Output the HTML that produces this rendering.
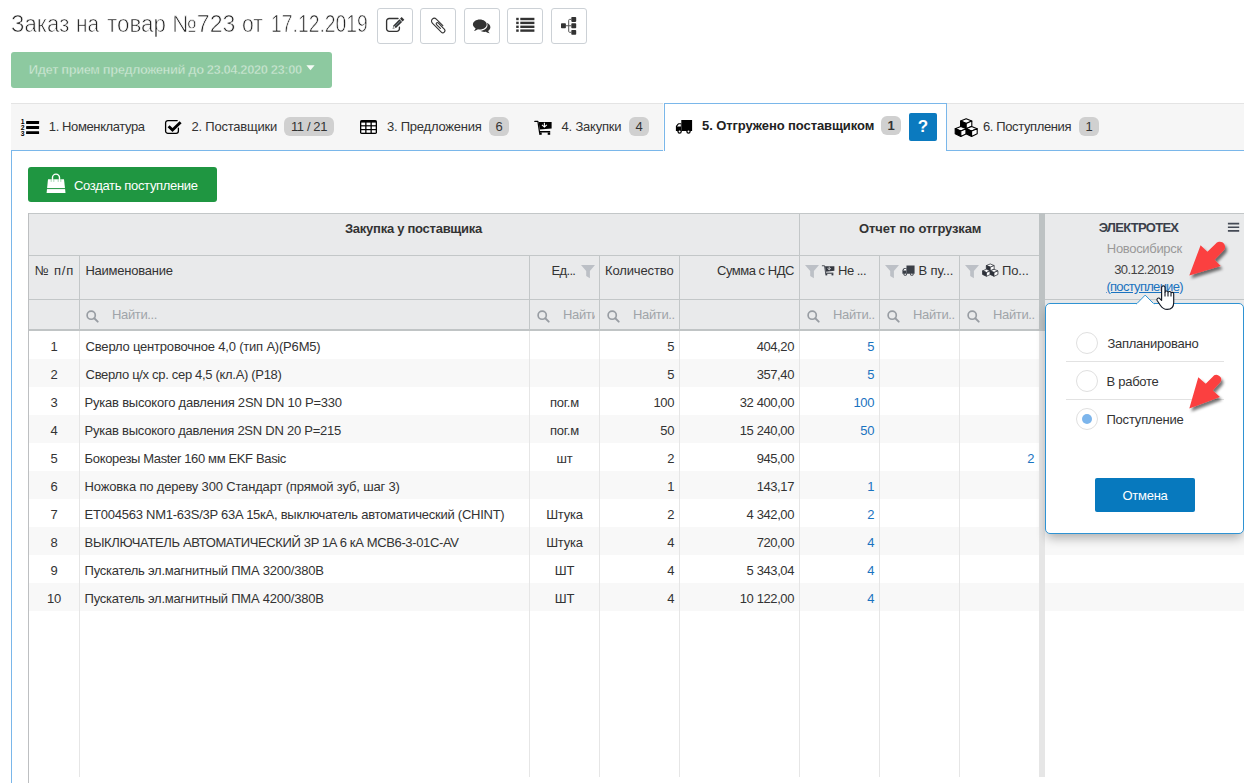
<!DOCTYPE html>
<html lang="ru">
<head>
<meta charset="utf-8">
<title>Заказ на товар №723</title>
<style>
*{box-sizing:border-box;margin:0;padding:0}
html,body{width:1244px;height:783px;overflow:hidden;background:#fff}
body{font-family:"Liberation Sans",sans-serif;font-size:13px;color:#333;position:relative}
.abs{position:absolute}
.tw{position:absolute;top:8px;font-size:23.5px;line-height:32px;color:#222;white-space:nowrap;-webkit-text-stroke:0.7px #fff}
.tb{position:absolute;top:8px;width:36px;height:36px;border:1px solid #ccd1d6;border-radius:3px;background:#fff}
.tb svg{position:absolute;left:0;top:0}
#status{left:11px;top:52px;width:321px;height:36px;background:#8dc9a0;border-radius:3px;color:#cbe6d3;-webkit-text-stroke:0.4px #8dc9a0;font-weight:bold;font-size:13px;line-height:35px;white-space:nowrap}
#tabs{left:11px;top:103px;width:1233px;height:48px;background:#f6f6f6;border-top:1px solid #e4e4e4;border-bottom:1px solid #7ab7ea}
.tl{position:absolute;top:103px;height:47px;line-height:47px;font-size:13px;color:#333;white-space:nowrap}
.badge{position:absolute;top:117px;height:19px;line-height:19px;border-radius:6px;background:#d0d0d0;color:#333;font-size:13px;text-align:center}
#tabactive{left:664px;top:103px;width:283px;height:48px;background:#fff;border:1px solid #7ab7ea;border-bottom:none;box-shadow:-1px 0 0 #fdfbf8}
#help{left:909px;top:113px;width:28px;height:28px;background:#0b7abf;border-radius:2px;color:#fff;font-weight:bold;font-size:17px;line-height:28px;text-align:center}
#panel{left:11px;top:151px;width:1px;height:640px;background:#7ab7ea}
#create{left:28px;top:167px;width:189px;height:35px;background:#1f9641;border-radius:3px;color:#fff;font-size:13px;line-height:37px;white-space:nowrap}
#grid{position:absolute;left:0;top:0;width:1244px;height:783px}
.hbg{position:absolute;left:28px;top:213px;width:1216px;height:117px;background:#e9eaeb}
.hl{position:absolute;height:1px;background:#c3c7c8}
.hl2{position:absolute;height:2px;background:#c0c4c5}
.vlh{position:absolute;width:1px;background:#c3c7c8}
.vlb{position:absolute;width:1px;top:331px;height:446px;background:#e6e6e6}
.gleft{position:absolute;left:28px;top:213px;width:1px;height:570px;background:#bdbfc1}
.sep-h{position:absolute;left:1039px;top:213px;width:6px;height:118px;background:#bdc2c3}
.sep-b{position:absolute;left:1039px;top:331px;width:6px;height:446px;background:#e6e6e6}
.stripe{position:absolute;left:29px;width:1215px;height:28px;background:#f8f8f8}
.ht{position:absolute;font-size:13px;line-height:17px;color:#333;white-space:nowrap}
.b{font-weight:bold}
.ft{position:absolute;top:306px;height:18px;line-height:18px;font-size:13px;color:#a0a4a9;white-space:nowrap;overflow:hidden;letter-spacing:-0.35px}
.c{position:absolute;height:28px;line-height:32px;font-size:13px;color:#333;white-space:nowrap}
.ctr{text-align:center;letter-spacing:-0.2px}
.r{text-align:right;letter-spacing:-0.4px}
.bl{color:#1a73c0}
#pop{left:1045px;top:303px;width:199px;height:231px;background:#fff;border:1px solid #2f93d3;border-radius:5px;box-shadow:0 6px 11px -2px rgba(0,0,0,.3)}
.rad{position:absolute;left:1076px;width:22px;height:22px;border:1px solid #e0e0e0;border-radius:50%;background:#fff}
.rad i{position:absolute;left:5px;top:5px;width:10px;height:10px;border-radius:50%;background:#7cb5ec}
.psep{position:absolute;left:1066px;width:158px;height:1px;background:#e2e2e2}
#cancel{left:1095px;top:478px;width:100px;height:34px;background:#0779be;border-radius:2px;color:#fff;font-size:13px;line-height:36px;text-align:center;letter-spacing:-0.25px}

</style>
</head>
<body>
<svg width="0" height="0" style="position:absolute">
 <defs>
  <g id="i_cart">
   <path d="M1.8 2.4 H4.9 L6.6 13.6" fill="none" stroke="currentColor" stroke-width="1.2" stroke-linecap="round" stroke-linejoin="round"/>
   <path d="M5.6 3.1 H18.600000000000001 V9.4 L6.7 10.6 z" fill="currentColor"/>
   <path d="M11.4 3.8 V7.4 M9 5.9 L11.4 8.1 L13.8 5.9" fill="none" stroke="#fff" stroke-width="1.1"/>
   <rect x="6.6" y="12" width="10.6" height="1.5" fill="currentColor"/>
   <rect x="6.2" y="13.5" width="2.5" height="2.3" fill="currentColor"/><rect x="14.7" y="13.5" width="2.5" height="2.3" fill="currentColor"/>
  </g>
  <g id="i_truck">
   <path d="M7.3 2 H18.1 V13 H7.3 z" fill="currentColor"/>
   <path d="M7.3 5.3 H4.6 a1.2 1.2 0 0 0 -0.9 0.4 L1.9 8.1 V13 H7.3 z" fill="currentColor"/>
   <path d="M3 8.6 L4.8 6.3 H6.8 V8.6 z" fill="#fff"/>
   <circle cx="5.6" cy="13.6" r="2.2" fill="currentColor"/><circle cx="5.6" cy="13.6" r="1" fill="#fff"/>
   <circle cx="14.5" cy="13.6" r="2.2" fill="currentColor"/><circle cx="14.5" cy="13.6" r="1" fill="#fff"/>
  </g>
  <g id="i_cube1">
   <path d="M-5.6 2.3 L0 0 L5.6 2.3 L0 4.6 z" fill="#fff" stroke="currentColor" stroke-width="1.1" stroke-linejoin="round"/>
   <path d="M-5.6 2.3 L0 4.6 V10 L-5.6 7.4 z" fill="currentColor" stroke="currentColor" stroke-width="1.1" stroke-linejoin="round"/>
   <path d="M0 4.6 L5.6 2.3 V7.4 L0 10 z" fill="#fff" stroke="currentColor" stroke-width="1.1" stroke-linejoin="round"/>
  </g>
  <g id="i_cubes">
   <use href="#i_cube1" x="13.2" y="2.800000000000001"/>
   <use href="#i_cube1" x="7.8" y="10.4"/>
   <use href="#i_cube1" x="18.6" y="10.4"/>
  </g>
  <g id="i_funnel">
   <path d="M0 0 H14 L8.9 5.9 V13.2 L5.2 11 V5.9 z" fill="#bcc0c6"/>
  </g>
 </defs>
</svg>
<svg width="0" height="0" style="position:absolute">
 <defs>
  <filter id="ash" x="-30%" y="-30%" width="170%" height="170%"><feGaussianBlur in="SourceAlpha" stdDeviation="1.6"/><feOffset dx="2" dy="3"/><feComponentTransfer><feFuncA type="linear" slope="0.55"/></feComponentTransfer><feMerge><feMergeNode/><feMergeNode in="SourceGraphic"/></feMerge></filter>
  <g id="i_arrow1" filter="url(#ash)"><path d="M14.3 43.5 L25.6 13.2 L32.4 19.8 L40.4 11.9 A5.3 5.3 0 0 1 49.1 18 L39.6 27.7 L45.7 34 z" fill="#fb4040"/></g>
  <g id="i_arrow2" filter="url(#ash)"><path d="M14.3 43.5 L23.3 12.2 L30.7 18.7 L37.5 11.9 A4.75 4.75 0 0 1 45.5 17 L37.8 25.6 L45 32 z" fill="#fb4040"/></g>
 </defs>
</svg>

<div class="tw" style="left:11px"><span id="tw1" style="display:inline-block;transform-origin:0 50%;transform:scaleX(0.9469);position:relative;left:-0.5px">Заказ</span></div><div class="tw" style="left:77px"><span id="tw2" style="display:inline-block;transform-origin:0 50%;transform:scaleX(0.8865);position:relative;left:-1.0px">на</span></div><div class="tw" style="left:107px"><span id="tw3" style="display:inline-block;transform-origin:0 50%;transform:scaleX(0.9525);position:relative;left:-0.5px">товар</span></div><div class="tw" style="left:173px"><span id="tw4" style="display:inline-block;transform-origin:0 50%;transform:scaleX(0.9859);position:relative;left:-1.0px">№723</span></div><div class="tw" style="left:243px"><span id="tw5" style="display:inline-block;transform-origin:0 50%;transform:scaleX(0.9);position:relative;left:-1.0px">от</span></div><div class="tw" style="left:271px"><span id="tw6" style="display:inline-block;transform-origin:0 50%;transform:scaleX(0.8237);position:relative;left:-0.5px">17.12.2019</span></div>

<div class="tb" style="left:377px" id="tb1"></div>
<div class="tb" style="left:420px" id="tb2"></div>
<div class="tb" style="left:464px" id="tb3"></div>
<div class="tb" style="left:507px" id="tb4"></div>
<div class="tb" style="left:551px" id="tb5"></div>

<!-- toolbar icons (inside 36x36 buttons, coords relative to page) -->
<svg class="abs" style="left:377px;top:8px" width="36" height="36" viewBox="0 0 36 36">
 <path d="M21 10.5 H12.2 a2.6 2.6 0 0 0 -2.6 2.6 V20.7 a2.6 2.6 0 0 0 2.6 2.6 H19.8 a2.6 2.6 0 0 0 2.6 -2.6 V19.2" fill="none" stroke="#333" stroke-width="1.35" stroke-linecap="round"/>
 <g transform="translate(15.6 20.8) rotate(-45)">
  <path d="M0 0 L3.3 -1.85 H11.6 V1.85 H3.3 z" fill="#333"/>
  <path d="M0.9 0 L3.1 -1.1 V1.1 z" fill="#fff"/>
  <path d="M3.6 -0.05 H11.4" stroke="#8fa3b0" stroke-width="0.8"/>
  <rect x="12.3" y="-1.85" width="2.4" height="3.7" fill="#333"/>
 </g>
</svg>
<svg class="abs" style="left:420px;top:8px" width="36" height="36" viewBox="0 0 36 36">
 <g transform="translate(18.55 17.35) rotate(-45)" fill="none" stroke="#333" stroke-width="1.1" stroke-linecap="round">
  <path d="M2.8 3.3 V-6 A2.8 2.8 0 0 0 -2.8 -6 V6.7 A2.1 2.1 0 0 0 1.4 6.7 V-1.95 A1.15 1.15 0 0 0 -0.9 -1.95 V3.5"/>
 </g>
</svg>
<svg class="abs" style="left:464.4px;top:8.7px" width="36" height="36" viewBox="0 0 36 36">
 <path d="M22.5 13.7 c2.3 0.8 3.9 2.5 3.9 4.5 c0 1.5 -0.9 2.8 -2.3 3.7 c0.3 0.9 0.9 1.7 1.7 2.3 c-1.6 0 -3 -0.5 -4 -1.4 c-0.5 0.1 -1 0.1 -1.5 0.1 c-1.6 0 -3 -0.4 -4.1 -1.1 c4.100000000000001 -0.2 7.3 -2.8 7.3 -5.9 c0 -0.8 -0.3 -1.5 -1 -2.2 z" fill="#333"/>
 <path d="M15.8 10.5 c3.8 0 6.9 2.2 6.9 5 s-3.100000000000001 5 -6.9 5 c-0.6 0 -1.2 -0.1 -1.8 -0.2 c-1.1 0.9 -2.5 1.500000000000001 -4.1 1.500000000000001 c0.8 -0.6 1.4 -1.5 1.7 -2.5 c-1.6 -0.9 -2.7 -2.3 -2.7 -3.8 c0 -2.8 3.1 -5 6.9 -5 z" fill="#333"/>
</svg>
<svg class="abs" style="left:507px;top:8px" width="36" height="36" viewBox="0 0 36 36">
 <g fill="#333">
  <rect x="9.2" y="9.8" width="2.5" height="2.4"/><rect x="13.3" y="9.8" width="14.1" height="2.4"/>
  <rect x="9.2" y="13.7" width="2.5" height="2.4"/><rect x="13.3" y="13.7" width="14.1" height="2.4"/>
  <rect x="9.2" y="17.6" width="2.5" height="2.4"/><rect x="13.3" y="17.6" width="14.1" height="2.4"/>
  <rect x="9.2" y="21.4" width="2.5" height="2.4"/><rect x="13.3" y="21.4" width="14.1" height="2.4"/>
 </g>
</svg>
<svg class="abs" style="left:551px;top:8px" width="36" height="36" viewBox="0 0 36 36">
 <g fill="#333">
  <rect x="10" y="15.3" width="4.9" height="4.9" rx="0.8"/>
  <rect x="20.3" y="9" width="4.9" height="4.9" rx="0.8"/>
  <rect x="20.3" y="15.3" width="4.9" height="4.9" rx="0.8"/>
  <rect x="20.3" y="21.9" width="4.9" height="4.9" rx="0.8"/>
 </g>
 <path d="M14.9 17.75 H20.3 M20.3 11.4 H18.6 a0.9 0.9 0 0 0 -0.9 0.9 V23.4 a0.9 0.9 0 0 0 0.9 0.9 H20.3" fill="none" stroke="#555" stroke-width="1"/>
</svg>

<div id="status" class="abs"><div style="position:absolute;left:19px;top:0"><span id="st_t" style="letter-spacing:-0.437px;position:relative;left:-1.2px">Идет прием предложений до 23.04.2020 23:00</span></div><svg style="position:absolute;left:294.5px;top:13px" width="10" height="6" viewBox="0 0 10 6"><path d="M0.4 0.2 H8.6 L4.5 5.2 z" fill="#f6fbf7"/></svg></div>

<div id="tabs" class="abs"></div>
<div id="tabactive" class="abs"></div>
<div class="tl" style="left:49px"><span id="t1" style="letter-spacing:-0.386px;position:relative;left:-0.2px">1. Номенклатура</span></div>
<div class="tl" style="left:191px"><span id="t2" style="letter-spacing:-0.236px;position:relative;left:0.6px">2. Поставщики</span></div>
<div class="badge" style="left:284px;width:50px;letter-spacing:-0.4px">11 / 21</div>
<div class="tl" style="left:386px"><span id="t3" style="letter-spacing:-0.231px;position:relative;left:1.0px">3. Предложения</span></div>
<div class="badge" style="left:489px;width:20px">6</div>
<div class="tl" style="left:561px"><span id="t4" style="letter-spacing:-0.207px;position:relative;left:0.6px">4. Закупки</span></div>
<div class="badge" style="left:629px;width:20px">4</div>
<div class="tl b" style="left:701px;top:102px;color:#222"><span id="t5" style="letter-spacing:-0.087px;position:relative;left:1.0px">5. Отгружено поставщиком</span></div>
<div class="badge b" style="left:881px;top:116px;width:20px">1</div>
<div id="help" class="abs">?</div>
<div class="tl" style="left:982px"><span id="t6" style="letter-spacing:-0.385px;position:relative;left:1.0px">6. Поступления</span></div>
<div class="badge" style="left:1079px;width:20px">1</div>

<!-- tab icons -->
<svg class="abs" style="left:20px;top:117px" width="21" height="21" viewBox="0 0 21 21">
 <g fill="#000"><rect x="6.1" y="4" width="13" height="2.9" rx="0.4"/><rect x="6.1" y="9" width="13" height="2.9" rx="0.4"/><rect x="6.1" y="14.2" width="13" height="2.9" rx="0.4"/></g>
 <g font-family="Liberation Sans, sans-serif" font-weight="bold" font-size="6.8" fill="#000"><text x="0.8" y="6.8">1</text><text x="0.8" y="12.8">2</text><text x="0.8" y="19.4">3</text></g>
</svg>
<svg class="abs" style="left:163px;top:117px" width="21" height="21" viewBox="0 0 21 21">
 <path d="M14.2 3.6 H4.9 a2.3 2.3 0 0 0 -2.3 2.300000000000001 V14 a2.3 2.3 0 0 0 2.3 2.3 H13.1 a2.3 2.3 0 0 0 2.3 -2.3 V11.2" fill="none" stroke="#000" stroke-width="1.3" stroke-linecap="round"/>
 <path d="M5.6 9.2 L9.5 13 L17.6 5.200000000000001" fill="none" stroke="#000" stroke-width="2.9" stroke-linejoin="miter"/>
</svg>
<svg class="abs" style="left:359px;top:118px" width="20" height="18" viewBox="0 0 20 18">
 <rect x="1" y="2" width="17" height="13.9" rx="1.6" fill="#000"/>
 <g fill="#fff">
  <rect x="2.3" y="4.6" width="3.9" height="2.6"/><rect x="7.5" y="4.6" width="4" height="2.6"/><rect x="12.8" y="4.6" width="3.9" height="2.6"/>
  <rect x="2.3" y="8.4" width="3.9" height="2.6"/><rect x="7.5" y="8.4" width="4" height="2.6"/><rect x="12.8" y="8.4" width="3.9" height="2.6"/>
  <rect x="2.3" y="12.2" width="3.9" height="2.5"/><rect x="7.5" y="12.2" width="4" height="2.5"/><rect x="12.8" y="12.2" width="3.9" height="2.5"/>
 </g>
</svg>
<svg class="abs" style="left:533px;top:119px;color:#000" width="21" height="18" viewBox="0 0 21 18"><use href="#i_cart"/></svg>
<svg class="abs" style="left:674px;top:118px;color:#000" width="21" height="18" viewBox="0 0 21 18"><use href="#i_truck"/></svg>
<svg class="abs" style="left:953px;top:116px;color:#000" width="27" height="23" viewBox="0 0 27 23"><use href="#i_cubes"/></svg>

<div id="panel" class="abs"></div>
<div id="create" class="abs"><svg style="position:absolute;left:17px;top:6px" width="22" height="22" viewBox="0 0 22 22"><path d="M3 6.2 H19 L20.5 20 H1.6 z" fill="#fff"/><path d="M7.5 8.6 V4.6 a3.5 3.5 0 0 1 7 0 V8.6" fill="none" stroke="#fff" stroke-width="1.4"/><path d="M6.2 6.2 V8.9 M8.8 6.2 V8.9 M13.2 6.2 V8.9 M15.8 6.2 V8.9" stroke="#1f9641" stroke-width="0.7" opacity="0.55"/><path d="M1.9 15.6 H20.1" stroke="#1f9641" stroke-width="1"/></svg><div style="position:absolute;left:46px;top:0"><span id="cr_t" style="letter-spacing:-0.333px;position:relative;left:0.0px">Создать поступление</span></div></div>

<div id="grid">
<div class="hbg"></div>
<div class="hl" style="left:28px;top:213px;width:1216px"></div>
<div class="hl" style="left:28px;top:255px;width:1017px"></div>
<div class="hl" style="left:28px;top:299px;width:1216px"></div>
<div class="hl2" style="left:28px;top:329px;width:1017px"></div>
<div class="stripe" style="top:359px"></div>
<div class="stripe" style="top:415px"></div>
<div class="stripe" style="top:471px"></div>
<div class="stripe" style="top:527px"></div>
<div class="stripe" style="top:583px"></div>
<div class="vlh" style="left:79px;top:255px;height:75px"></div>
<div class="vlb" style="left:79px"></div>
<div class="vlh" style="left:529px;top:255px;height:75px"></div>
<div class="vlb" style="left:529px"></div>
<div class="vlh" style="left:599px;top:255px;height:75px"></div>
<div class="vlb" style="left:599px"></div>
<div class="vlh" style="left:679px;top:255px;height:75px"></div>
<div class="vlb" style="left:679px"></div>
<div class="vlh" style="left:799px;top:213px;height:117px"></div>
<div class="vlb" style="left:799px"></div>
<div class="vlh" style="left:879px;top:255px;height:75px"></div>
<div class="vlb" style="left:879px"></div>
<div class="vlh" style="left:959px;top:255px;height:75px"></div>
<div class="vlb" style="left:959px"></div>
<div class="gleft"></div>
<div class="sep-h"></div><div class="sep-b"></div>
<div class="ht b" style="left:28px;top:213px;width:771px;height:42px;line-height:31px;text-align:center"><span id="h_zak" style="letter-spacing:-0.263px;position:relative;left:0.0px">Закупка у поставщика</span></div>
<div class="ht b" style="left:799px;top:213px;width:240px;height:42px;line-height:31px;text-align:center"><span id="h_otch" style="letter-spacing:-0.118px;position:relative;left:1.2px">Отчет по отгрузкам</span></div>
<div class="ht" style="left:35px;top:262px"><span id="h_npp" style="letter-spacing:0.8px;position:relative;left:-0.2px">№ п/п</span></div>
<div class="ht" style="left:85px;top:262px"><span id="h_naim" style="letter-spacing:-0.227px;position:relative;left:0.4px">Наименование</span></div>
<div class="ht" style="left:552px;top:262px"><span id="h_ed" style="letter-spacing:-0.7px;position:relative;left:-0.4px">Ед...</span></div>
<div class="ht" style="left:605px;top:262px"><span id="h_kol" style="letter-spacing:-0.126px;position:relative;left:0.0px">Количество</span></div>
<div class="ht" style="left:716px;top:262px"><span id="h_sum" style="letter-spacing:-0.48px;position:relative;left:1.0px">Сумма с НДС</span></div>
<div class="ht" style="left:839px;top:262px"><span id="h_ne" style="letter-spacing:-0.5px;position:relative;left:-1.0px">Не ...</span></div>
<div class="ht" style="left:919px;top:262px"><span id="h_vpu" style="letter-spacing:-0.082px;position:relative;left:-0.5px">В пу...</span></div>
<div class="ht" style="left:1002px;top:262px"><span id="h_po" style="letter-spacing:-0.125px;position:relative;left:-0.0px">По...</span></div>
<!-- grid header icons -->
<svg class="abs" style="left:580.5px;top:265px" width="14" height="14" viewBox="0 0 14 14"><use href="#i_funnel"/></svg>
<svg class="abs" style="left:804.7px;top:264.9px" width="14" height="14" viewBox="0 0 14 14"><use href="#i_funnel"/></svg>
<svg class="abs" style="left:884.8px;top:264.9px" width="14" height="14" viewBox="0 0 14 14"><use href="#i_funnel"/></svg>
<svg class="abs" style="left:965px;top:264.9px" width="14" height="14" viewBox="0 0 14 14"><use href="#i_funnel"/></svg>
<svg class="abs" style="left:821.2px;top:264.3px;color:#343840" width="15.1" height="13" viewBox="0 0 21 18"><use href="#i_cart"/></svg>
<svg class="abs" style="left:901.2px;top:264.1px;color:#3a3f47" width="15.75" height="13.5" viewBox="0 0 21 18"><use href="#i_truck"/></svg>
<svg class="abs" style="left:980.7px;top:262.4px;color:#2c3038" width="18.9" height="16.1" viewBox="0 0 27 23"><use href="#i_cubes"/></svg>

<svg class="abs" style="left:86.4px;top:310.4px" width="13" height="13" viewBox="0 0 14 14"><circle cx="5.6" cy="5.6" r="4.4" fill="none" stroke="#989da3" stroke-width="1.8"/><path d="M8.9 8.9 L12.6 12.6" stroke="#989da3" stroke-width="2" stroke-linecap="round"/></svg>
<div class="ft" style="left:112px;width:417px">Найти...</div>
<svg class="abs" style="left:537.4px;top:310.4px" width="13" height="13" viewBox="0 0 14 14"><circle cx="5.6" cy="5.6" r="4.4" fill="none" stroke="#989da3" stroke-width="1.8"/><path d="M8.9 8.9 L12.6 12.6" stroke="#989da3" stroke-width="2" stroke-linecap="round"/></svg>
<div class="ft" style="left:563px;width:32px">Найти...</div>
<svg class="abs" style="left:607.4px;top:310.4px" width="13" height="13" viewBox="0 0 14 14"><circle cx="5.6" cy="5.6" r="4.4" fill="none" stroke="#989da3" stroke-width="1.8"/><path d="M8.9 8.9 L12.6 12.6" stroke="#989da3" stroke-width="2" stroke-linecap="round"/></svg>
<div class="ft" style="left:633px;width:42px">Найти...</div>
<svg class="abs" style="left:807.4px;top:310.4px" width="13" height="13" viewBox="0 0 14 14"><circle cx="5.6" cy="5.6" r="4.4" fill="none" stroke="#989da3" stroke-width="1.8"/><path d="M8.9 8.9 L12.6 12.6" stroke="#989da3" stroke-width="2" stroke-linecap="round"/></svg>
<div class="ft" style="left:833px;width:42px">Найти...</div>
<svg class="abs" style="left:887.4px;top:310.4px" width="13" height="13" viewBox="0 0 14 14"><circle cx="5.6" cy="5.6" r="4.4" fill="none" stroke="#989da3" stroke-width="1.8"/><path d="M8.9 8.9 L12.6 12.6" stroke="#989da3" stroke-width="2" stroke-linecap="round"/></svg>
<div class="ft" style="left:913px;width:42px">Найти...</div>
<svg class="abs" style="left:967.4px;top:310.4px" width="13" height="13" viewBox="0 0 14 14"><circle cx="5.6" cy="5.6" r="4.4" fill="none" stroke="#989da3" stroke-width="1.8"/><path d="M8.9 8.9 L12.6 12.6" stroke="#989da3" stroke-width="2" stroke-linecap="round"/></svg>
<div class="ft" style="left:993px;width:42px">Найти...</div>
<div class="c ctr" style="left:29px;width:50px;top:331px">1</div>
<div class="c" style="left:85px;top:331px"><span id="n1" style="letter-spacing:-0.196px;position:relative;left:0.6px">Сверло центровочное 4,0 (тип А)(Р6М5)</span></div>
<div class="c r" style="left:600px;width:74px;top:331px">5</div>
<div class="c r" style="left:680px;width:114px;top:331px">404,20</div>
<div class="c r bl" style="left:800px;width:74px;top:331px">5</div>
<div class="c ctr" style="left:29px;width:50px;top:359px">2</div>
<div class="c" style="left:85px;top:359px"><span id="n2" style="letter-spacing:-0.312px;position:relative;left:0.6px">Сверло ц/х ср. сер 4,5 (кл.А) (Р18)</span></div>
<div class="c r" style="left:600px;width:74px;top:359px">5</div>
<div class="c r" style="left:680px;width:114px;top:359px">357,40</div>
<div class="c r bl" style="left:800px;width:74px;top:359px">5</div>
<div class="c ctr" style="left:29px;width:50px;top:387px">3</div>
<div class="c" style="left:85px;top:387px"><span id="n3" style="letter-spacing:-0.227px;position:relative;left:-0.4px">Рукав высокого давления 2SN DN 10 P=330</span></div>
<div class="c ctr" style="left:530px;width:69px;top:387px">пог.м</div>
<div class="c r" style="left:600px;width:74px;top:387px">100</div>
<div class="c r" style="left:680px;width:114px;top:387px">32 400,00</div>
<div class="c r bl" style="left:800px;width:74px;top:387px">100</div>
<div class="c ctr" style="left:29px;width:50px;top:415px">4</div>
<div class="c" style="left:85px;top:415px"><span id="n4" style="letter-spacing:-0.247px;position:relative;left:-0.4px">Рукав высокого давления 2SN DN 20 P=215</span></div>
<div class="c ctr" style="left:530px;width:69px;top:415px">пог.м</div>
<div class="c r" style="left:600px;width:74px;top:415px">50</div>
<div class="c r" style="left:680px;width:114px;top:415px">15 240,00</div>
<div class="c r bl" style="left:800px;width:74px;top:415px">50</div>
<div class="c ctr" style="left:29px;width:50px;top:443px">5</div>
<div class="c" style="left:85px;top:443px"><span id="n5" style="letter-spacing:-0.355px;position:relative;left:-0.4px">Бокорезы Master 160 мм EKF Basic</span></div>
<div class="c ctr" style="left:530px;width:69px;top:443px">шт</div>
<div class="c r" style="left:600px;width:74px;top:443px">2</div>
<div class="c r" style="left:680px;width:114px;top:443px">945,00</div>
<div class="c r bl" style="left:960px;width:74px;top:443px">2</div>
<div class="c ctr" style="left:29px;width:50px;top:471px">6</div>
<div class="c" style="left:85px;top:471px"><span id="n6" style="letter-spacing:-0.167px;position:relative;left:-0.4px">Ножовка по дереву 300 Стандарт (прямой зуб, шаг 3)</span></div>
<div class="c r" style="left:600px;width:74px;top:471px">1</div>
<div class="c r" style="left:680px;width:114px;top:471px">143,17</div>
<div class="c r bl" style="left:800px;width:74px;top:471px">1</div>
<div class="c ctr" style="left:29px;width:50px;top:499px">7</div>
<div class="c" style="left:85px;top:499px"><span id="n7" style="letter-spacing:-0.246px;position:relative;left:-0.4px">ЕТ004563 NM1-63S/3P 63A 15кА, выключатель автоматический (CHINT)</span></div>
<div class="c ctr" style="left:530px;width:69px;top:499px">Штука</div>
<div class="c r" style="left:600px;width:74px;top:499px">2</div>
<div class="c r" style="left:680px;width:114px;top:499px">4 342,00</div>
<div class="c r bl" style="left:800px;width:74px;top:499px">2</div>
<div class="c ctr" style="left:29px;width:50px;top:527px">8</div>
<div class="c" style="left:85px;top:527px"><span id="n8" style="letter-spacing:-0.36px;position:relative;left:-0.4px">ВЫКЛЮЧАТЕЛЬ АВТОМАТИЧЕСКИЙ 3P 1A 6 кА МСВ6-3-01С-AV</span></div>
<div class="c ctr" style="left:530px;width:69px;top:527px">Штука</div>
<div class="c r" style="left:600px;width:74px;top:527px">4</div>
<div class="c r" style="left:680px;width:114px;top:527px">720,00</div>
<div class="c r bl" style="left:800px;width:74px;top:527px">4</div>
<div class="c ctr" style="left:29px;width:50px;top:555px">9</div>
<div class="c" style="left:85px;top:555px"><span id="n9" style="letter-spacing:-0.231px;position:relative;left:-0.4px">Пускатель эл.магнитный ПМА 3200/380В</span></div>
<div class="c ctr" style="left:530px;width:69px;top:555px">ШТ</div>
<div class="c r" style="left:600px;width:74px;top:555px">4</div>
<div class="c r" style="left:680px;width:114px;top:555px">5 343,04</div>
<div class="c r bl" style="left:800px;width:74px;top:555px">4</div>
<div class="c ctr" style="left:29px;width:50px;top:583px">10</div>
<div class="c" style="left:85px;top:583px"><span id="n10" style="letter-spacing:-0.231px;position:relative;left:-0.4px">Пускатель эл.магнитный ПМА 4200/380В</span></div>
<div class="c ctr" style="left:530px;width:69px;top:583px">ШТ</div>
<div class="c r" style="left:600px;width:74px;top:583px">4</div>
<div class="c r" style="left:680px;width:114px;top:583px">10 122,00</div>
<div class="c r bl" style="left:800px;width:74px;top:583px">4</div>
</div>
<!-- right column header -->
<div class="ht b" style="left:1099px;top:219px;color:#3a3f4a"><span id="p_el" style="letter-spacing:-0.715px;position:relative;left:-0.2px">ЭЛЕКТРОТЕХ</span></div>
<svg class="abs" style="left:1227px;top:221px" width="14" height="13" viewBox="0 0 14 13"><path d="M0.9 2.6 H12.2 M0.9 6.2 H12.2 M0.9 9.9 H12.2" stroke="#444a55" stroke-width="1.6"/></svg>
<div class="ht" style="left:1107px;top:240px;color:#999"><span id="p_nsk" style="letter-spacing:-0.32px;position:relative;left:-0.2px">Новосибирск</span></div>
<div class="ht" style="left:1114px;top:261px;color:#444"><span id="p_dt" style="letter-spacing:-0.571px;position:relative;left:0.2px">30.12.2019</span></div>
<div class="ht" style="left:1106px;top:278px;color:#1a73c0;text-decoration:underline"><span id="p_lnk" style="letter-spacing:-0.702px;position:relative;left:0.4px">(поступление)</span></div>

<!-- popup -->
<div id="pop" class="abs"></div>
<svg class="abs" style="left:1134px;top:292px" width="24" height="13" viewBox="0 0 24 13"><path d="M2.1 11.9 H2.6 L11.2 3.1 L19.9 11.9 H20.4" fill="#fff" stroke="#2f93d3" stroke-width="1"/><rect x="3" y="11.45" width="16.6" height="1.6" fill="#fff"/></svg>
<div class="rad" style="top:332px"></div>
<div class="ht" style="left:1107px;top:335px"><span id="p_r1" style="letter-spacing:-0.25px;position:relative;left:0.4px">Запланировано</span></div>
<div class="psep" style="top:361px"></div>
<div class="rad" style="top:370px"></div>
<div class="ht" style="left:1107px;top:373px"><span id="p_r2" style="letter-spacing:-0.252px;position:relative;left:-0.6px">В работе</span></div>
<div class="psep" style="top:399px"></div>
<div class="rad" style="top:408px"><i></i></div>
<div class="ht" style="left:1107px;top:411px"><span id="p_r3" style="letter-spacing:-0.18px;position:relative;left:-0.6px">Поступление</span></div>
<div id="cancel" class="abs"><span id="p_btn">Отмена</span></div>

<!-- red arrows -->
<svg class="abs" style="left:1175px;top:232px;overflow:visible" width="60" height="56" viewBox="0 0 60 56"><use href="#i_arrow1"/></svg>
<svg class="abs" style="left:1175px;top:365px;overflow:visible" width="60" height="56" viewBox="0 0 60 56"><use href="#i_arrow2"/></svg>

<!-- hand cursor -->
<svg class="abs" style="left:1154px;top:284px" width="22" height="28" viewBox="0 0 22 28">
 <path d="M7.6 16.4 V3.6 a1.7 1.7 0 0 1 3.4 0 V8.3 a1.5 1.5 0 0 1 3 0.4 a1.5 1.5 0 0 1 3 0.6 a1.4 1.4 0 0 1 2.7 0.7 V18.4 c0 4.3 -2.6 7 -6.5 7 c-3.3 0 -5.100000000000001 -1.5 -6.9 -4.2 L3 16.3 a1.7 1.7 0 0 1 2.5 -2 z" fill="#fff" stroke="#141a26" stroke-width="1.15" stroke-linejoin="round"/>
 <path d="M11 8.3 V12.4 M14 8.9 V12.4 M17 9.7 V12.6" stroke="#141a26" stroke-width="1.1" fill="none"/>
</svg>

</body>
</html>
